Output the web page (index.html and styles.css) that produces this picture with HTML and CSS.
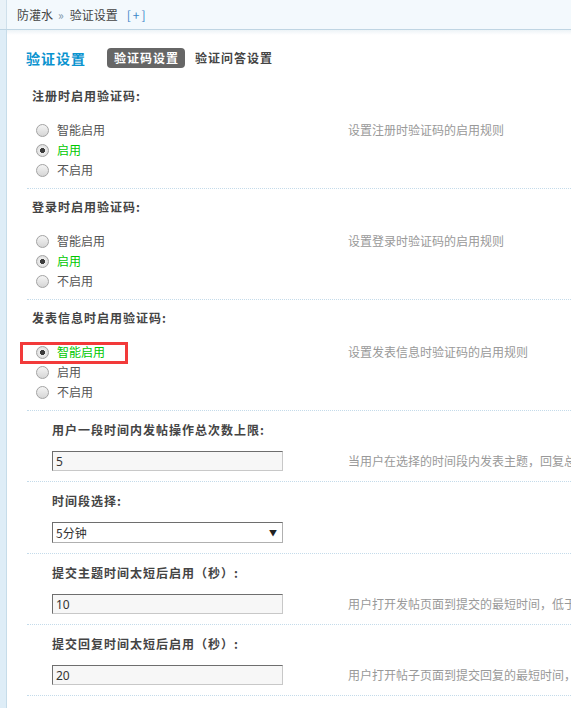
FILE: index.html
```html
<!DOCTYPE html>
<html lang="zh-CN">
<head>
<meta charset="utf-8">
<title>验证设置</title>
<link rel="stylesheet" href="styles.css">
</head>
<body>
<div class="page">
  <div class="topbar">
    <div class="topbar-edge"></div>
    <div class="crumbs"><span>防灌水</span><span class="arrow">»</span><span>验证设置</span><span class="plus">[+]</span></div>
  </div>
  <div class="layout">
    <div class="strip"></div>
    <div class="content">
      <div class="titlebar">
        <h3 class="title">验证设置</h3>
        <ul class="tabs">
          <li class="tab active">验证码设置</li>
          <li class="tab">验证问答设置</li>
        </ul>
      </div>
      <div class="form">
        <section class="sec">
          <div class="sec-head">注册时启用验证码:</div>
          <div class="sec-body">
            <ul class="radios">
              <li><input type="radio" name="r1"><label>智能启用</label></li>
              <li class="on"><input type="radio" name="r1" checked><label>启用</label></li>
              <li><input type="radio" name="r1"><label>不启用</label></li>
            </ul>
            <div class="tip">设置注册时验证码的启用规则</div>
          </div>
        </section>
        <section class="sec">
          <div class="sec-head">登录时启用验证码:</div>
          <div class="sec-body">
            <ul class="radios">
              <li><input type="radio" name="r2"><label>智能启用</label></li>
              <li class="on"><input type="radio" name="r2" checked><label>启用</label></li>
              <li><input type="radio" name="r2"><label>不启用</label></li>
            </ul>
            <div class="tip">设置登录时验证码的启用规则</div>
          </div>
        </section>
        <section class="sec">
          <div class="sec-head">发表信息时启用验证码:</div>
          <div class="sec-body">
            <ul class="radios">
              <li class="on marked"><input type="radio" name="r3" checked><label>智能启用</label><span class="highlight"></span></li>
              <li><input type="radio" name="r3"><label>启用</label></li>
              <li><input type="radio" name="r3"><label>不启用</label></li>
            </ul>
            <div class="tip">设置发表信息时验证码的启用规则</div>
          </div>
        </section>
        <section class="sub">
          <div class="sub-head">用户一段时间内发帖操作总次数上限:</div>
          <div class="sub-body">
            <div class="field"><input class="text" type="text" value="5"></div>
            <div class="tip">当用户在选择的时间段内发表主题，回复总数超过此上限时启用验证码</div>
          </div>
        </section>
        <section class="sub">
          <div class="sub-head">时间段选择:</div>
          <div class="sub-body">
            <div class="field"><div class="select-wrap"><select class="select"><option>5分钟</option><option>10分钟</option><option>30分钟</option></select></div></div>
            <div class="tip"></div>
          </div>
        </section>
        <section class="sub">
          <div class="sub-head">提交主题时间太短后启用（秒）:</div>
          <div class="sub-body">
            <div class="field"><input class="text" type="text" value="10"></div>
            <div class="tip">用户打开发帖页面到提交的最短时间，低于此时间将启用验证码</div>
          </div>
        </section>
        <section class="sub">
          <div class="sub-head">提交回复时间太短后启用（秒）:</div>
          <div class="sub-body">
            <div class="field"><input class="text" type="text" value="20"></div>
            <div class="tip">用户打开帖子页面到提交回复的最短时间，低于此时间将启用验证码</div>
          </div>
        </section>
        <section class="sub">
          <div class="sub-head">连续发帖时间间隔（秒）:</div>
          <div class="sub-body">
            <div class="field"><input class="text" type="text" value="30"></div>
            <div class="tip"></div>
          </div>
        </section>
      </div>
    </div>
  </div>
</div>
</body>
</html>
```
FILE: styles.css
```css
html, body {
  margin: 0;
  padding: 0;
  overflow: hidden;
  background: #fff;
}
body {
  width: 571px;
  height: 708px;
  font-family: "Noto Sans CJK SC", "Noto Sans", sans-serif;
  font-size: 12px;
  line-height: 20px;
  color: #444;
}
.page {
  width: 571px;
  height: 708px;
  overflow: hidden;
  display: flex;
  flex-direction: column;
}
.topbar {
  flex: none;
  display: flex;
  height: 29px;
  background: #f3f9fd;
  border-bottom: 1px solid #bfd5e3;
}
.topbar-edge {
  width: 6px;
  background: #e9f2f8;
  border-right: 1px solid #cfe0eb;
}
.crumbs {
  padding-left: 10px;
  line-height: 29px;
  white-space: nowrap;
  color: #444;
}
.crumbs .arrow {
  color: #7f97a8;
  margin: 0 6px 0 5px;
}
.crumbs .plus {
  color: #3b86c8;
  margin-left: 9px;
  letter-spacing: 2px;
}
.layout {
  flex: 1;
  display: flex;
  min-height: 0;
}
.strip {
  flex: none;
  width: 6px;
  background: #deedf7;
  border-right: 1px solid #c6dce9;
}
.content {
  flex: 1;
  min-width: 0;
  overflow: hidden;
  padding-left: 20px;
  background: linear-gradient(#edf3f7, #fff 5px);
}
.titlebar {
  display: flex;
  align-items: center;
  height: 20px;
  margin-top: 18px;
}
.title {
  margin: 0 0 0 -1px;
  font-size: 14px;
  font-weight: bold;
  letter-spacing: 1px;
  color: #0a93cf;
  line-height: 20px;
}
.tabs {
  display: flex;
  list-style: none;
  margin: 0 0 0 21px;
  padding: 0;
  gap: 10px;
}
.tab {
  font-weight: bold;
  letter-spacing: 1px;
  color: #444;
  line-height: 20px;
  white-space: nowrap;
}
.tab.active {
  background: #666;
  color: #fff;
  border-radius: 4px;
  padding: 0 6px 0 7px;
}
.form {
  width: 900px;
  margin-top: 10px;
}
.sec {
  padding: 8px 0;
  border-bottom: 1px dotted #c4dbea;
}
.sec-head {
  padding-left: 5px;
  font-weight: bold;
  letter-spacing: 1px;
  color: #444;
  margin-bottom: 14px;
}
.sec-body, .sub-body {
  display: grid;
  grid-template-columns: 316px 1fr;
}
.radios {
  list-style: none;
  margin: 0;
  padding: 0 0 0 5px;
}
.radios li {
  position: relative;
  display: flex;
  align-items: center;
  height: 20px;
  color: #555;
}
.radios li.on label {
  color: #00c800;
}
.radios input {
  appearance: none;
  -webkit-appearance: none;
  box-sizing: border-box;
  width: 13px;
  height: 13px;
  margin: 0 8px 0 4px;
  border-radius: 50%;
  border: 1px solid #a3a3a3;
  background: linear-gradient(#f4f4f4, #d6d6d6);
}
.radios input:checked {
  background: radial-gradient(circle, #3d3d3d 0, #3d3d3d 2.3px, #ededed 2.8px, #d2d2d2 100%);
}
.highlight {
  position: absolute;
  left: -12px;
  top: 0;
  width: 108px;
  height: 22px;
  box-sizing: border-box;
  border: 3px solid #f23a3a;
}
.tip {
  padding-left: 5px;
  color: #999;
  white-space: nowrap;
}
.sub {
  padding: 9px 0 10px;
  border-bottom: 1px dotted #c4dbea;
}
.sub-head {
  padding-left: 25px;
  font-weight: bold;
  letter-spacing: 1px;
  color: #444;
  margin-bottom: 11px;
}
.field {
  padding-left: 25px;
  display: flex;
  align-items: center;
}
.text {
  box-sizing: border-box;
  width: 231px;
  height: 20px;
  margin: 0;
  padding: 0 3px;
  border: 1px solid;
  border-color: #6e6e6e #c8c8c8 #c8c8c8 #6e6e6e;
  background: #f7f7f7;
  font-family: "Noto Sans", "DejaVu Sans", sans-serif;
  font-size: 12px;
  color: #333;
  outline: none;
}
.select-wrap {
  position: relative;
  width: 231px;
  height: 21px;
}
.select-wrap::after {
  content: "▼";
  position: absolute;
  right: 6px;
  top: 0;
  line-height: 21px;
  font-size: 8px;
  color: #222;
  pointer-events: none;
}
.select {
  appearance: none;
  -webkit-appearance: none;
  box-sizing: border-box;
  width: 231px;
  height: 21px;
  margin: 0;
  padding: 0 3px;
  border: 1px solid;
  border-color: #6e6e6e #b0b0b0 #b0b0b0 #6e6e6e;
  border-radius: 0;
  background: #fff;
  font-family: "Noto Sans CJK SC", sans-serif;
  font-size: 12px;
  color: #333;
}
```
